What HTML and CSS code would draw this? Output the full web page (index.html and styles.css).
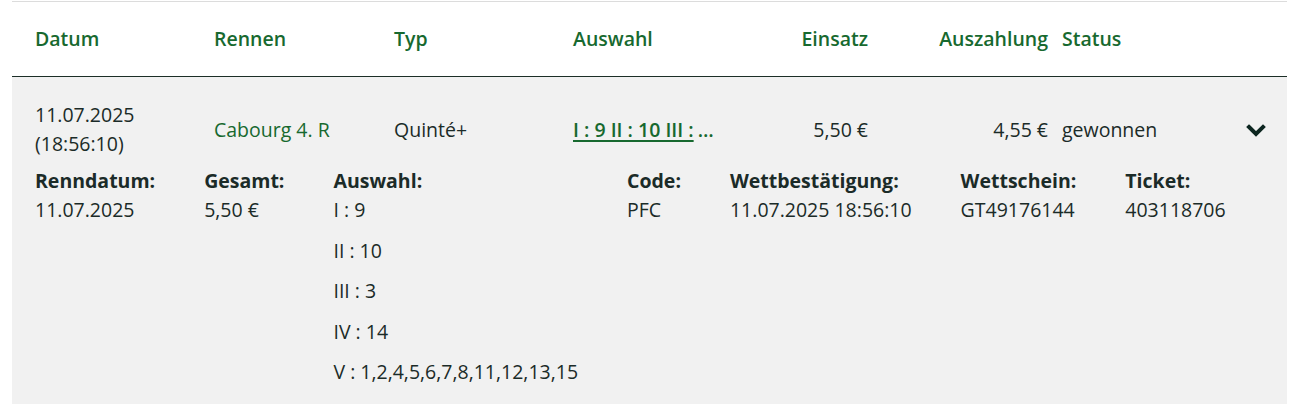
FILE: index.html
```html
<!DOCTYPE html>
<html lang="de">
<head>
<meta charset="utf-8">
<title>Wetten</title>
<link rel="stylesheet" href="styles.css">
</head>
<body>
<div class="bets">
  <div class="row head">
    <div class="c">Datum</div>
    <div class="c">Rennen</div>
    <div class="c">Typ</div>
    <div class="c">Auswahl</div>
    <div class="c num">Einsatz</div>
    <div class="c num pay">Auszahlung</div>
    <div class="c">Status</div>
    <div class="c"></div>
  </div>
  <div class="item">
    <div class="row main">
      <div class="c">11.07.2025<br>(18:56:10)</div>
      <div class="c race">Cabourg 4. R</div>
      <div class="c">Quinté+</div>
      <div class="c pick"><a class="sel" href="#">I : 9 II : 10 III :</a><span class="more">…</span></div>
      <div class="c num">5,50 €</div>
      <div class="c num pay">4,55 €</div>
      <div class="c">gewonnen</div>
      <div class="c toggle">
        <svg width="20" height="13" viewBox="0 0 20 13"><polyline points="3,3 10,10 17,3" fill="none" stroke="#0d2620" stroke-width="4" stroke-linecap="square" stroke-linejoin="miter"/></svg>
      </div>
    </div>
    <div class="details">
      <div class="d">
        <div class="lbl">Renndatum:</div>
        <div>11.07.2025</div>
      </div>
      <div class="d">
        <div class="lbl">Gesamt:</div>
        <div>5,50 €</div>
      </div>
      <div class="d">
        <div class="lbl">Auswahl:</div>
        <div class="list">
          <div>I : 9</div>
          <div>II : 10</div>
          <div>III : 3</div>
          <div>IV : 14</div>
          <div>V : 1,2,4,5,6,7,8,11,12,13,15</div>
        </div>
      </div>
      <div class="d">
        <div class="lbl">Code:</div>
        <div>PFC</div>
      </div>
      <div class="d">
        <div class="lbl">Wettbestätigung:</div>
        <div>11.07.2025 18:56:10</div>
      </div>
      <div class="d">
        <div class="lbl">Wettschein:</div>
        <div>GT49176144</div>
      </div>
      <div class="d">
        <div class="lbl">Ticket:</div>
        <div>403118706</div>
      </div>
    </div>
  </div>
</div>
</body>
</html>
```

FILE: styles.css
```css
html, body {
  margin: 0;
  padding: 0;
  background: #ffffff;
}
body {
  font-family: "Open Sans", "Noto Sans", sans-serif;
  font-size: 19.5px;
  line-height: 29px;
  color: #1b2b28;
}
.bets {
  margin: 1px 0 0 12px;
  width: 1275px;
  border-top: 1px solid #dcdcdc;
}
.row {
  display: grid;
  grid-template-columns: 179px 180px 179px 160px 135px 194px 174px 40px;
  padding-left: 23px;
  align-items: center;
}
.head {
  padding-top: 22px;
  padding-bottom: 23px;
  border-bottom: 1px solid #1c2e27;
  color: #17692f;
  font-weight: 600;
}
.num {
  text-align: right;
}
.pay {
  padding-right: 14px;
}
.item {
  background: #f1f1f1;
  height: 340px;
}
.main {
  padding-top: 23px;
  padding-bottom: 8px;
}
.race {
  color: #17692f;
}
.pick {
  white-space: nowrap;
  color: #17692f;
  font-weight: 600;
}
.sel {
  color: #17692f;
  text-decoration: underline;
  text-decoration-thickness: 1.5px;
  text-underline-offset: 3px;
}
.more {
  margin-left: 4px;
}
.toggle {
  display: flex;
  justify-content: center;
  padding-top: 2px;
}
.toggle svg {
  display: block;
}
.details {
  display: flex;
  column-gap: 49px;
  padding-left: 23px;
}
.lbl {
  font-weight: 700;
}
.list {
  display: flex;
  flex-direction: column;
  row-gap: 11.5px;
}
```
